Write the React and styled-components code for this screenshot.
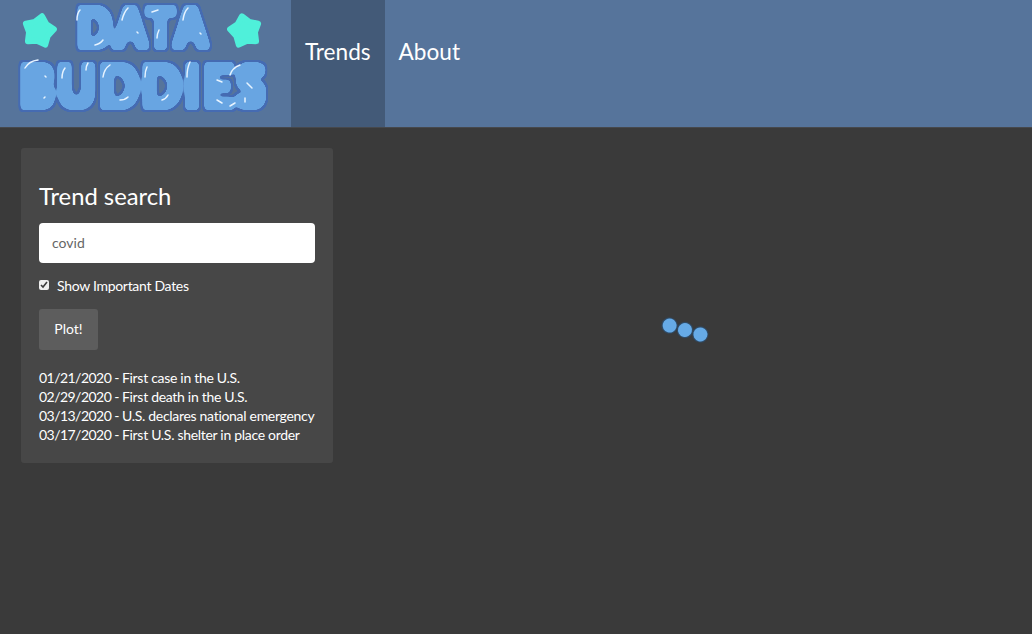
import React from 'react';
import styled, { createGlobalStyle } from 'styled-components';

const GlobalStyle = createGlobalStyle`
    html, body {
        margin: 0;
        padding: 0;
        background: #3a3a3a;
        font-family: Lato, "Open Sans", sans-serif;
    }
    * { box-sizing: border-box; }
`
const Page = styled.div`
    width: 1032px;
    height: 634px;
    overflow: hidden;
    display: flex;
    flex-direction: column;
    background: #3a3a3a;
`
const Navbar = styled.nav`
    height: 128px;
    flex: none;
    display: flex;
    background: #56749b;
    border-bottom: 1px solid #46484c;
`
const Brand = styled.div`
    width: 291px;
    height: 127px;
`
const Tab = styled.a`
    padding: 0 14px;
    height: 127px;
    line-height: 103px;
    font-size: 22.6px;
    color: #ffffff;
    background: ${props => props.$active ? "#435a78" : "transparent"};
`
const Body = styled.div`
    flex: 1;
    display: flex;
    align-items: flex-start;
`
const Sidebar = styled.aside`
    width: 312px;
    height: 315px;
    margin: 20px 0 0 21px;
    padding: 33px 18px 0;
    flex: none;
    background: #474747;
    border-radius: 3px;
    color: #ffffff;
`
const Title = styled.h2`
    margin: 0 0 11px;
    font-size: 23.8px;
    line-height: 31px;
    font-weight: 400;
`
const SearchInput = styled.input`
    display: block;
    width: 100%;
    height: 40px;
    padding: 0 13px 2px;
    border: none;
    border-radius: 4px;
    background: #ffffff;
    color: #666666;
    font: 14px Lato, sans-serif;
`
const CheckRow = styled.label`
    margin-top: 13px;
    height: 18px;
    display: flex;
    align-items: center;
    gap: 8px;
    font-size: 14px;
    letter-spacing: -0.3px;
`
const Check = styled.input`
    width: 10px;
    height: 10px;
    margin: 0;
    accent-color: #eeeeee;
`
const PlotButton = styled.button`
    display: block;
    margin-top: 15px;
    width: 59px;
    height: 41px;
    padding: 0 0 2px;
    border: none;
    border-radius: 3px;
    background: #5d5d5d;
    color: #ffffff;
    font: 14px Lato, sans-serif;
`
const Dates = styled.div`
    margin-top: 18px;
    font-size: 14px;
    line-height: 19px;
    letter-spacing: -0.3px;
    white-space: nowrap;
`
const Stamp = styled.span`
    letter-spacing: -0.54px;
`
const Main = styled.main`
    flex: 1;
    height: 100%;
    position: relative;
`
const Spinner = styled.div`
    position: absolute;
    left: 329px;
    top: 195px;
    display: flex;
    gap: 2px;
    transform: rotate(16deg);
`
const Dot = styled.span`
    width: 14px;
    height: 14px;
    border-radius: 50%;
    background: #66aae6;
    box-shadow: 0 0 1px 1px rgba(43, 86, 128, 0.75);
`

const Star = ({ x, y, r }) => {
    const pts = [];
    for (let i = 0; i < 10; i++) {
        const a = -Math.PI / 2 + r + i * Math.PI / 5;
        const d = i % 2 ? 10 : 15;
        pts.push(`${x + Math.cos(a) * d},${y + Math.sin(a) * d}`);
    }
    return <polygon points={pts.join(' ')} fill="#4ff0da" stroke="#4ff0da" strokeWidth="6" strokeLinejoin="round" />;
};

const LogoText = styled.text`
    font-family: Lato, "DejaVu Sans", sans-serif;
    font-weight: 900;
    fill: #fff;
    filter: url(#goo);
`

const Logo = () => (
    <svg width="291" height="127" viewBox="0 0 291 127">
        <defs>
            <filter id="goo" x="-10%" y="-20%" width="120%" height="140%" colorInterpolationFilters="sRGB">
                <feMorphology in="SourceAlpha" operator="dilate" radius="3.4" result="fat" />
                <feGaussianBlur in="fat" stdDeviation="2.4" result="fatBlur" />
                <feColorMatrix in="fatBlur" values="0 0 0 0 0.27  0 0 0 0 0.42  0 0 0 0 0.70  0 0 0 14 -6" result="inner" />
                <feMorphology in="inner" operator="dilate" radius="2" result="outerShape" />
                <feFlood floodColor="#68a5e2" />
                <feComposite in2="inner" operator="in" result="light" />
                <feGaussianBlur in="outerShape" stdDeviation="0.6" result="outerSoft" />
                <feMerge>
                    <feMergeNode in="outerSoft" />
                    <feMergeNode in="light" />
                </feMerge>
            </filter>
        </defs>
        <Star x={39} y={31} r={0.2} />
        <Star x={245} y={31} r={-0.2} />
        <g transform="translate(144 47) scale(0.83 1)">
            <LogoText x={0} y={0} fontSize="54" letterSpacing="5" textAnchor="middle">DATA</LogoText>
        </g>
        <g transform="translate(144 107) scale(0.885 1)">
            <LogoText x={0} y={0} fontSize="58" letterSpacing="4" textAnchor="middle">BUDDIES</LogoText>
        </g>
        <g fill="none" stroke="#e6f3ff" strokeWidth="1.5" strokeLinecap="round">
            <path d="M80 10q-3 3-3 10M103 40q-3 4-8 5M128 8q-4 4-6 12M137 32l1 1M158 10l-6 2M159 30q-2 4-2 8M188 8q-4 4-5 12M200 33l1 1" />
            <path d="M38 60q-9 1-13 8M45 76l1 1M45 97l-1 1M65 68q-3 4-3 10M88 63q-2 3-2 7M110 65q-6 4-7 12M128 97q-3 3-8 3M147 67q-2 4-2 10M168 95q-2 4-6 5M190 62q-3 6-3 15M240 65q-8 3-10 10M217 80l5 2M217 100l5 3M247 83l5 5M245 98v4M235 103l-5 3" />
        </g>
    </svg>
);

const App = () => {
    return (
        <Page>
            <GlobalStyle />
            <Navbar>
                <Brand><Logo /></Brand>
                <Tab $active>Trends</Tab>
                <Tab>About</Tab>
            </Navbar>
            <Body>
                <Sidebar>
                    <Title>Trend search</Title>
                    <SearchInput defaultValue="covid" />
                    <CheckRow>
                        <Check type="checkbox" defaultChecked />
                        Show Important Dates
                    </CheckRow>
                    <PlotButton>Plot!</PlotButton>
                    <Dates>
                        <div><Stamp>01/21/2020 - </Stamp>First case in the U.S.</div>
                        <div><Stamp>02/29/2020 - </Stamp>First death in the U.S.</div>
                        <div><Stamp>03/13/2020 - </Stamp>U.S. declares national emergency</div>
                        <div><Stamp>03/17/2020 - </Stamp>First U.S. shelter in place order</div>
                    </Dates>
                </Sidebar>
                <Main>
                    <Spinner>
                        <Dot />
                        <Dot />
                        <Dot />
                    </Spinner>
                </Main>
            </Body>
        </Page>
    );
};

export default App;
